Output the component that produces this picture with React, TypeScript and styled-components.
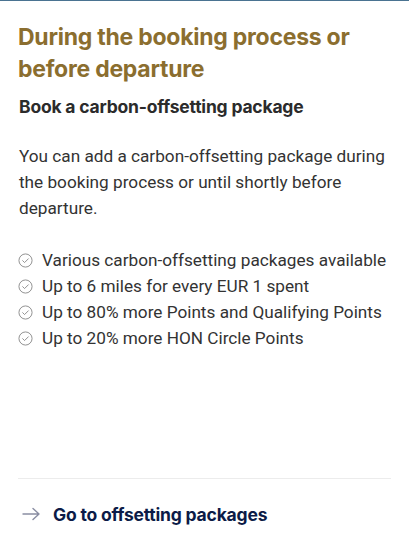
import styled, { createGlobalStyle } from "styled-components";

const Global = createGlobalStyle`
	html, body {
		margin: 0;
		padding: 0;
		background: #fff;
	}
	body {
		font-family: Roboto, "Liberation Sans", sans-serif;
	}
`;

const Card = styled.section`
	box-sizing: border-box;
	width: 409px;
	height: 559px;
	border-top: 1px solid #4a7391;
	padding: 20px 18px 0 18px;
	display: flex;
	flex-direction: column;
	background: #fff;
`;

const Title = styled.h2`
	margin: 0;
	font-family: Inter, "Noto Sans", sans-serif;
	font-size: 23px;
	font-weight: 700;
	line-height: 32px;
	letter-spacing: -0.25px;
	color: #8b6e2f;
`;

const Subtitle = styled.h3`
	margin: 10px 0 0 1px;
	font-family: Inter, "Noto Sans", sans-serif;
	font-size: 17.5px;
	font-weight: 700;
	line-height: 24px;
	letter-spacing: -0.2px;
	color: #2b2b2b;
`;

const Text = styled.p`
	margin: 24px 0 0 1px;
	font-size: 17.2px;
	line-height: 26px;
	color: #333;
`;

const List = styled.ul`
	list-style: none;
	margin: 26px 0 0 0;
	padding: 0;
`;

const Item = styled.li`
	display: flex;
	align-items: center;
	gap: 9px;
	font-size: 17.2px;
	line-height: 26px;
	color: #333;
`;

const Check = () => (
	<svg width="15" height="15" viewBox="0 0 16 16" fill="none" stroke="#8c8c8c" strokeWidth="1">
		<circle cx="8" cy="8" r="7" />
		<path d="M5 8.2l2 2 4-4" strokeLinecap="round" strokeLinejoin="round" />
	</svg>
);

const Spacer = styled.div`
	flex: 1;
`;

const Divider = styled.hr`
	margin: 0;
	border: none;
	border-top: 1px solid #ececec;
`;

const LinkRow = styled.a`
	display: flex;
	align-items: center;
	gap: 12px;
	margin: 22px 0 32px 4px;
	height: 26px;
	text-decoration: none;
	font-family: Inter, "Noto Sans", sans-serif;
	font-size: 17.5px;
	font-weight: 700;
	letter-spacing: -0.2px;
	color: #0c1b47;
`;

const Arrow = () => (
	<svg width="19" height="14" viewBox="0 0 19 14" fill="none" stroke="#8a8ea3" strokeWidth="1.4">
		<path d="M1 7h16M11 1.5L17 7l-6 5.5" strokeLinecap="round" strokeLinejoin="round" />
	</svg>
);

const items = [
	"Various carbon-offsetting packages available",
	"Up to 6 miles for every EUR 1 spent",
	"Up to 80% more Points and Qualifying Points",
	"Up to 20% more HON Circle Points",
];

export default function App() {
	return (
		<>
			<Global />
			<Card>
				<Title>During the booking process or before departure</Title>
				<Subtitle>Book a carbon-offsetting package</Subtitle>
				<Text>
					You can add a carbon-offsetting package during the booking process or until shortly before departure.
				</Text>
				<List>
					{items.map((t) => (
						<Item key={t}>
							<Check />
							{t}
						</Item>
					))}
				</List>
				<Spacer />
				<Divider />
				<LinkRow href="#">
					<Arrow />
					Go to offsetting packages
				</LinkRow>
			</Card>
		</>
	);
}
